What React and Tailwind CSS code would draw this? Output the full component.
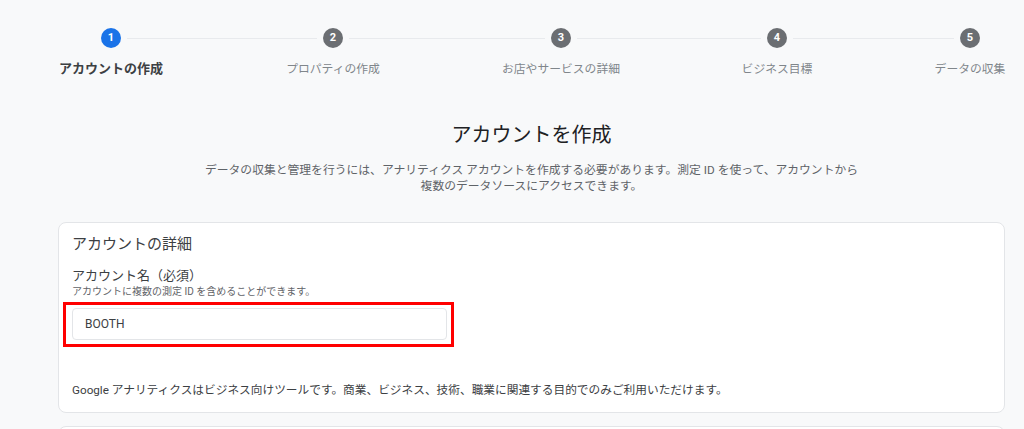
import React from 'react';

const steps = [
  { n: 1, label: 'アカウントの作成', active: true },
  { n: 2, label: 'プロパティの作成' },
  { n: 3, label: 'お店やサービスの詳細' },
  { n: 4, label: 'ビジネス目標' },
  { n: 5, label: 'データの収集' },
];

const lineWidths = ['w-[190px]', 'w-[196px]', 'w-[184px]', 'w-[161px]'];

const Step = ({ n, label, active }) => (
  <div className="flex w-5 flex-col items-center">
    <div
      className={
        'flex h-5 w-5 items-center justify-center rounded-full text-[11px] font-bold text-white ' +
        (active ? 'bg-[#1a73e8]' : 'bg-[#6b6e72]')
      }
    >
      {n}
    </div>
    <div
      className={
        'mt-[13px] whitespace-nowrap leading-4 ' +
        (active ? 'text-[13px] font-bold text-[#3c4043]' : 'text-[11.8px] text-[#80868b]')
      }
    >
      {label}
    </div>
  </div>
);

const App = () => {
  return (
    <div className="min-h-screen overflow-hidden bg-[#f8f9fa] font-['Roboto','Noto_Sans_CJK_JP',sans-serif] text-[#202124]">
      {/* stepper */}
      <div className="flex items-start pl-[101px] pt-[28px]">
        {steps.map((s, i) => (
          <React.Fragment key={s.n}>
            <Step {...s} />
            {i < lineWidths.length && (
              <div className={'mx-[6px] mt-[10px] h-px bg-[#e8eaed] ' + lineWidths[i]} />
            )}
          </React.Fragment>
        ))}
      </div>

      <div className="ml-[58px] w-[947px]">
        <h1 className="mt-[44px] text-center text-[20px] leading-7 text-[#202124]">アカウントを作成</h1>
        <p className="mt-[13px] text-center text-[11.8px] leading-4 text-[#5f6368]">
          データの収集と管理を行うには、アナリティクス アカウントを作成する必要があります。測定 ID を使って、アカウントから
          <br />
          複数のデータソースにアクセスできます。
        </p>

        <div className="mt-[28px] rounded-lg border border-[#e3e5e8] bg-white px-[13px] pb-[14px] pt-[9px]">
          <h2 className="text-[15px] leading-6 text-[#3c4043]">アカウントの詳細</h2>
          <div className="mt-[11px] text-[13px] leading-[18px] text-[#3c4043]">アカウント名（必須）</div>
          <div className="text-[10px] leading-[14px] text-[#5f6368]">アカウントに複数の測定 ID を含めることができます。</div>
          <div className="-ml-[9px] mt-[3px] w-[391px] border-[3px] border-[#ff0000] pb-[4px] pl-[6px] pr-[4px] pt-[3px]">
            <div className="flex h-8 items-center rounded border border-[#e3e5e8] bg-white pl-3 text-[12px] text-[#3c4043]">
              BOOTH
            </div>
          </div>
          <p className="mt-[35px] text-[11.7px] leading-4 text-[#3c4043]">
            Google アナリティクスはビジネス向けツールです。商業、ビジネス、技術、職業に関連する目的でのみご利用いただけます。
          </p>
        </div>

        <div className="mt-[13px] h-[100px] rounded-lg border border-[#e3e5e8] bg-white" />
      </div>
    </div>
  );
};

export default App;
